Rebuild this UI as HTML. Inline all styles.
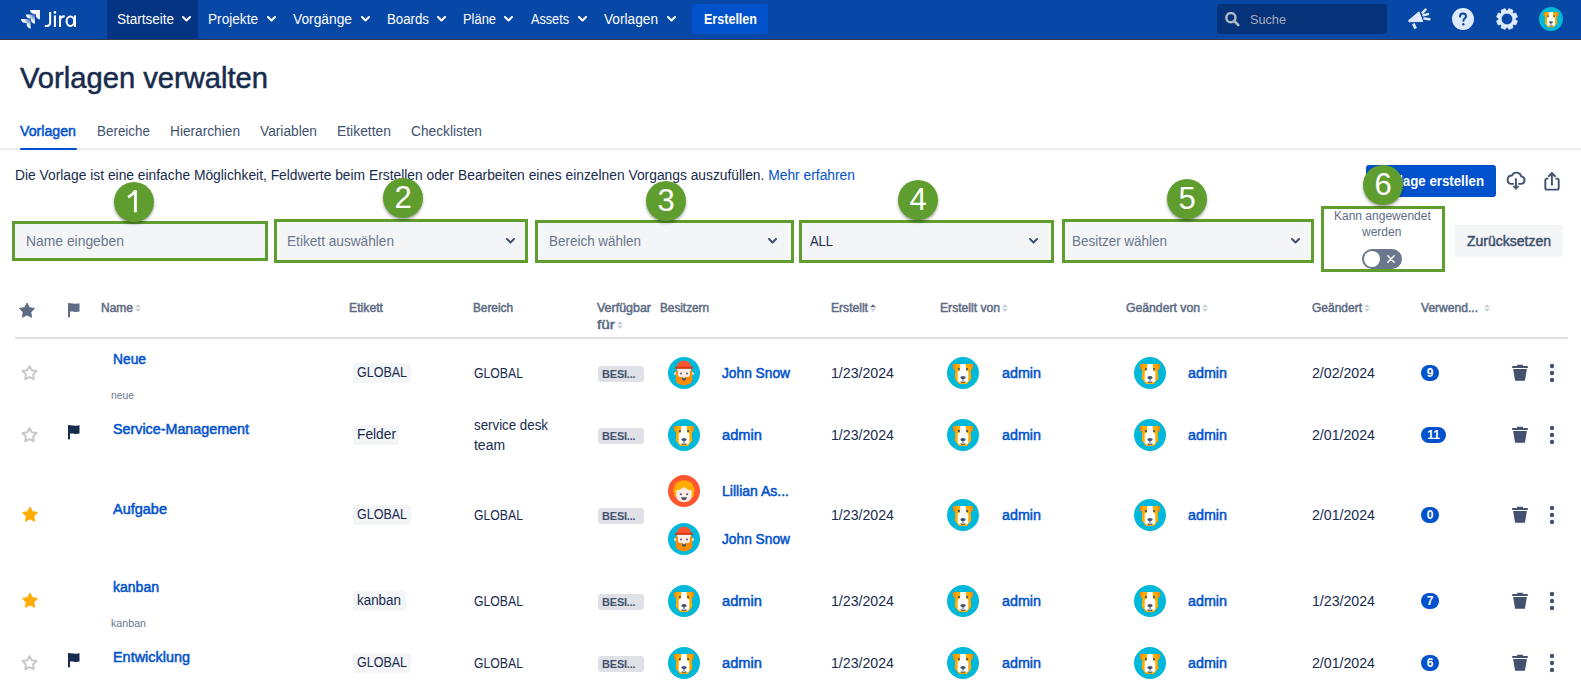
<!DOCTYPE html>
<html><head><meta charset="utf-8"><style>
html,body{margin:0;padding:0;background:#fff;width:1581px;height:696px;overflow:hidden;position:relative;font-family:"Liberation Sans", sans-serif;}
</style></head><body>

<svg width="0" height="0" style="position:absolute">
<defs>
<symbol id="dog" viewBox="0 0 32 32">
  <circle cx="16" cy="16" r="16" fill="#00b8d9"/>
  <path d="M5.8 8.3C6.5 7 8.5 6.6 10.3 7L10.3 12.8 6.6 12.4z" fill="#ff8b00"/>
  <path d="M26.2 8.3C25.5 7 23.5 6.6 21.7 7L21.7 12.8 25.4 12.4z" fill="#ff8b00"/>
  <path d="M8.6 7H23.4L24.2 21.5 20 27H12L7.8 21.5z" fill="#ffab00"/>
  <path d="M13.3 7H18.7L19 13.3 21.3 14.8V24.2L19.5 25.3H12.5L10.7 24.2V14.8L13 13.3z" fill="#fff"/>
  <circle cx="11.9" cy="12.1" r="1.15" fill="#42526e"/>
  <circle cx="20.1" cy="12.1" r="1.15" fill="#42526e"/>
  <ellipse cx="16" cy="20.4" rx="2.7" ry="1.5" fill="#42526e"/>
  <path d="M15.4 21.2h1.2v2.5h-1.2z" fill="#42526e"/>
  <path d="M13.5 24.3c1 .6 4 .6 5 0l-.6 1.5h-3.8z" fill="#42526e"/>
</symbol>
<symbol id="john" viewBox="0 0 32 32">
  <circle cx="16" cy="16" r="16" fill="#00b8d9"/>
  <circle cx="7.6" cy="16.6" r="1.6" fill="#ffebe6"/>
  <circle cx="24.4" cy="16.6" r="1.6" fill="#ffebe6"/>
  <path d="M8.8 10.5C8.8 6.5 12 3.8 16 3.8S23.2 6.5 23.2 10.5z" fill="#ff5630"/>
  <path d="M7.2 9.9h17.6v2H7.2z" fill="#de350b"/>
  <path d="M9 11.9h14v8H9z" fill="#ffebe6"/>
  <path d="M7.8 13.5h2.2v5.6c1.5 1 3.5 1.4 6 1.4s4.5-.4 6-1.4v-5.6h2.2v9.3c0 1.6-.8 2.6-1.6 3.1-.7.4-1.1 1-2 1.1-.6.1-1 .6-1.6.7-.6.1-1.2.5-1.9.5h-2.2c-.7 0-1.3-.4-1.9-.5-.6-.1-1-.6-1.6-.7-.9-.1-1.3-.7-2-1.1-.8-.5-1.6-1.5-1.6-3.1z" fill="#ff8b00"/>
  <circle cx="13" cy="16.6" r="1" fill="#505f79"/>
  <circle cx="19" cy="16.6" r="1" fill="#505f79"/>
  <path d="M14.5 19.8h3l-.5 .9h-2z" fill="#ffebe6"/>
  <path d="M13.8 21.3h4.4c0 1.5-1 2.4-2.2 2.4s-2.2-.9-2.2-2.4z" fill="#42526e"/>
</symbol>
<symbol id="lillian" viewBox="0 0 32 32">
  <circle cx="16" cy="16" r="16" fill="#ff5630"/>
  <path d="M5.5 16.5c-.8-1.5-.3-3.3.9-4 .3-4.2 4-6.9 9.6-6.9s9.3 2.7 9.6 6.9c1.2.7 1.7 2.5.9 4l-1 5.5H6.5z" fill="#ffab00"/>
  <path d="M8.2 15.2c3-.1 5.8-1.3 7.8-3.5 2 2.2 4.8 3.4 7.8 3.5V21c0 3.6-3.4 6.2-7.8 6.2S8.2 24.6 8.2 21z" fill="#ffebe6"/>
  <circle cx="12.8" cy="19.3" r="1.05" fill="#42526e"/>
  <circle cx="19.2" cy="19.3" r="1.05" fill="#42526e"/>
  <path d="M13.2 22.2h5.6c0 1.9-1.2 3-2.8 3s-2.8-1.1-2.8-3z" fill="#42526e"/>
  <path d="M14.6 24.5c.5-.7 2.3-.7 2.8 0-.5.6-2.3.6-2.8 0z" fill="#de350b"/>
</symbol>
<symbol id="starfill" viewBox="0 0 16 16"><path d="M8.00 0.90 L10.41 5.58 L15.61 6.43 L11.90 10.17 L12.70 15.37 L8.00 13.00 L3.30 15.37 L4.10 10.17 L0.39 6.43 L5.59 5.58Z" stroke-width="0.8" stroke-linejoin="round"/></symbol>
<symbol id="flag" viewBox="0 0 12 15"><rect x="0" y="0" width="2" height="14.6" rx="0.8"/><path d="M0 0.4C3-0.4 5.5 0.9 8 0.7 9.5 0.6 10.5 0.5 11.5 0.3V8.5C10 8.9 8.5 9.1 7 8.9 4.5 8.6 2.5 8.3 0 8.8Z"/></symbol>
<symbol id="trash" viewBox="0 0 24 24"><path d="M4.5 5.5h15v2h-15z M9.5 4h5v1.5h-5z M5.8 8.5h12.4l-1.4 11.5H7.2z"/></symbol>
<symbol id="sort" viewBox="0 0 7 10"><path d="M3.5 0.3L6.6 3.9H0.4z M3.5 9.7L6.6 6.1H0.4z"/></symbol>
</defs>
</svg>

<div style="position:absolute;left:0;top:0;width:1581px;height:39px;background:#0747a6"></div><div style="position:absolute;left:0;top:39px;width:1581px;height:1px;background:#333c4a"></div><svg style="position:absolute;left:20px;top:9px" width="21" height="21" viewBox="0 0 21 21">
<defs><radialGradient id="jg1" gradientUnits="userSpaceOnUse" cx="14.9" cy="5.4" r="9.5"><stop offset="0.15" stop-color="#fff" stop-opacity=".25"/><stop offset="0.75" stop-color="#fff" stop-opacity="1"/></radialGradient>
<radialGradient id="jg2" gradientUnits="userSpaceOnUse" cx="10.6" cy="9.9" r="9.5"><stop offset="0.15" stop-color="#fff" stop-opacity=".25"/><stop offset="0.75" stop-color="#fff" stop-opacity="1"/></radialGradient></defs>
<path d="M9.9 1.1H19.9V10.6C17.5 10.2 15.9 8.5 15.9 6V5.2H15C12.5 5.2 10.3 3.5 9.9 1.1Z" fill="#fff"/>
<path d="M5.8 5.4H14.9V14.9C12.5 14.5 10.9 12.8 10.9 10.3V9.4H10C7.5 9.4 6.2 7.8 5.8 5.4Z" fill="url(#jg1)"/>
<path d="M0.9 9.9H10.6V19.7C8.2 19.3 6.6 17.6 6.6 15.1V14H5.5C3 14 1.3 12.3 0.9 9.9Z" fill="url(#jg2)"/>
</svg><svg style="position:absolute;left:40px;top:5px" width="40" height="26" viewBox="0 0 40 26"><g fill="none" stroke="#fff" stroke-width="2.05"><path d="M10.15 7V17.3C10.15 19.8 8.8 21 6.8 21H4.85"/><path d="M14.9 10.4V22"/><path d="M20 10.4V22M20 14.6C20.6 12 22.3 11.2 24.8 11.4"/><ellipse cx="30.4" cy="16.2" rx="3.8" ry="4.8"/><path d="M35 10.4V22"/></g><circle cx="14.95" cy="7.4" r="1.3" fill="#fff"/></svg><div style="position:absolute;left:107px;top:0;width:91px;height:39px;background:#043482"></div><div style="position:absolute;left:117px;top:11px;width:61px;font-size:14px;line-height:16px;color:#fff;white-space:nowrap"><span style="display:inline-block;transform-origin:0 0;transform:scaleX(0.9638)">Startseite</span></div><svg style="position:absolute;left:182px;top:16px" width="9" height="6" viewBox="0 0 9 6"><path d="M1 1l3.5 3.5L8 1" fill="none" stroke="#fff" stroke-width="2" stroke-linecap="round" stroke-linejoin="round"/></svg><div style="position:absolute;left:208px;top:11px;width:54px;font-size:14px;line-height:16px;color:#fff;white-space:nowrap"><span style="display:inline-block;transform-origin:0 0;transform:scaleX(0.9735)">Projekte</span></div><svg style="position:absolute;left:267px;top:16px" width="9" height="6" viewBox="0 0 9 6"><path d="M1 1l3.5 3.5L8 1" fill="none" stroke="#fff" stroke-width="2" stroke-linecap="round" stroke-linejoin="round"/></svg><div style="position:absolute;left:293px;top:11px;width:63px;font-size:14px;line-height:16px;color:#fff;white-space:nowrap"><span style="display:inline-block;transform-origin:0 0;transform:scaleX(0.9841)">Vorgänge</span></div><svg style="position:absolute;left:361px;top:16px" width="9" height="6" viewBox="0 0 9 6"><path d="M1 1l3.5 3.5L8 1" fill="none" stroke="#fff" stroke-width="2" stroke-linecap="round" stroke-linejoin="round"/></svg><div style="position:absolute;left:387px;top:11px;width:46px;font-size:14px;line-height:16px;color:#fff;white-space:nowrap"><span style="display:inline-block;transform-origin:0 0;transform:scaleX(0.9468)">Boards</span></div><svg style="position:absolute;left:437px;top:16px" width="9" height="6" viewBox="0 0 9 6"><path d="M1 1l3.5 3.5L8 1" fill="none" stroke="#fff" stroke-width="2" stroke-linecap="round" stroke-linejoin="round"/></svg><div style="position:absolute;left:463px;top:11px;width:37px;font-size:14px;line-height:16px;color:#fff;white-space:nowrap"><span style="display:inline-block;transform-origin:0 0;transform:scaleX(0.9215)">Pläne</span></div><svg style="position:absolute;left:504px;top:16px" width="9" height="6" viewBox="0 0 9 6"><path d="M1 1l3.5 3.5L8 1" fill="none" stroke="#fff" stroke-width="2" stroke-linecap="round" stroke-linejoin="round"/></svg><div style="position:absolute;left:531px;top:11px;width:42px;font-size:14px;line-height:16px;color:#fff;white-space:nowrap"><span style="display:inline-block;transform-origin:0 0;transform:scaleX(0.9044)">Assets</span></div><svg style="position:absolute;left:578px;top:16px" width="9" height="6" viewBox="0 0 9 6"><path d="M1 1l3.5 3.5L8 1" fill="none" stroke="#fff" stroke-width="2" stroke-linecap="round" stroke-linejoin="round"/></svg><div style="position:absolute;left:604px;top:11px;width:58px;font-size:14px;line-height:16px;color:#fff;white-space:nowrap"><span style="display:inline-block;transform-origin:0 0;transform:scaleX(0.9768)">Vorlagen</span></div><svg style="position:absolute;left:667px;top:16px" width="9" height="6" viewBox="0 0 9 6"><path d="M1 1l3.5 3.5L8 1" fill="none" stroke="#fff" stroke-width="2" stroke-linecap="round" stroke-linejoin="round"/></svg><div style="position:absolute;left:692px;top:4px;width:76px;height:30px;background:#0052cc;border-radius:3px"></div><div style="position:absolute;left:704px;top:11px;font-size:14px;line-height:16px;color:#fff;font-weight:700;white-space:nowrap"><span style="display:inline-block;transform-origin:0 0;transform:scaleX(0.8962)">Erstellen</span></div><div style="position:absolute;left:1217px;top:4px;width:170px;height:30px;background:#06327a;border-radius:3px"></div><svg style="position:absolute;left:1225px;top:12px" width="16" height="16" viewBox="0 0 16 16"><circle cx="5.9" cy="5.7" r="4.6" fill="none" stroke="#b3bac5" stroke-width="2.4"/><path d="M9.3 9.2L13.3 13" stroke="#b3bac5" stroke-width="2.6" stroke-linecap="round"/></svg><div style="position:absolute;left:1250px;top:12px;font-size:13px;line-height:15px;color:#a5adba;white-space:nowrap"><span style="display:inline-block;transform-origin:0 0;transform:scaleX(0.9763)">Suche</span></div><svg style="position:absolute;left:1404px;top:5px" width="30" height="28" viewBox="0 0 30 28"><path d="M4.5 15.6L15 6.8 18.7 16.5 5 16.8z" fill="#deebff" stroke="#deebff" stroke-width="1" stroke-linejoin="round"/><path d="M9.3 18.6L11.6 23.7" stroke="#deebff" stroke-width="2.8"/><path d="M18.6 7.6L21.6 4.6 M19.5 10.3L24 9.1 M20.4 13.5L25.4 14.3" stroke="#deebff" stroke-width="2.5" stroke-linecap="round"/></svg><svg style="position:absolute;left:1452px;top:8px" width="22" height="22" viewBox="0 0 22 22"><circle cx="11" cy="11" r="11" fill="#deebff"/><path d="M8 8.5c0-2 1.4-3 3-3s3 1 3 2.8c0 2.2-2.6 2.2-2.6 4.5" fill="none" stroke="#0747a6" stroke-width="2" stroke-linecap="round"/><circle cx="11.3" cy="16.2" r="1.2" fill="#0747a6"/></svg><svg style="position:absolute;left:1496px;top:8px" width="22" height="22" viewBox="0 0 22 22"><path fill-rule="evenodd" fill="#deebff" stroke="#deebff" stroke-width="0.6" stroke-linejoin="round" d="M11.67 2.53 L12.95 0.48 L17.06 2.18 L16.52 4.54 L17.46 5.48 L19.82 4.94 L21.52 9.05 L19.47 10.33 L19.47 11.67 L21.52 12.95 L19.82 17.06 L17.46 16.52 L16.52 17.46 L17.06 19.82 L12.95 21.52 L11.67 19.47 L10.33 19.47 L9.05 21.52 L4.94 19.82 L5.48 17.46 L4.54 16.52 L2.18 17.06 L0.48 12.95 L2.53 11.67 L2.53 10.33 L0.48 9.05 L2.18 4.94 L4.54 5.48 L5.48 4.54 L4.94 2.18 L9.05 0.48 L10.33 2.53Z M16.7 11 A5.7 5.7 0 1 0 5.3 11 A5.7 5.7 0 1 0 16.7 11Z"/></svg><svg style="position:absolute;left:1539px;top:7px" width="24" height="24"><use href="#dog"/></svg><div style="position:absolute;left:20px;top:62px;font-size:29px;line-height:32px;color:#172b4d;-webkit-text-stroke:0.5px #172b4d;white-space:nowrap"><span style="display:inline-block;transform-origin:0 0;transform:scaleX(1.0054)">Vorlagen verwalten</span></div><div style="position:absolute;left:20px;top:123px;font-size:14px;line-height:16px;color:#0052cc;font-weight:400;-webkit-text-stroke:0.5px currentColor;white-space:nowrap"><span style="display:inline-block;transform-origin:0 0;transform:scaleX(1.0130)">Vorlagen</span></div><div style="position:absolute;left:97px;top:123px;font-size:14px;line-height:16px;color:#42526e;font-weight:400;white-space:nowrap"><span style="display:inline-block;transform-origin:0 0;transform:scaleX(0.9590)">Bereiche</span></div><div style="position:absolute;left:170px;top:123px;font-size:14px;line-height:16px;color:#42526e;font-weight:400;white-space:nowrap"><span style="display:inline-block;transform-origin:0 0;transform:scaleX(0.9777)">Hierarchien</span></div><div style="position:absolute;left:260px;top:123px;font-size:14px;line-height:16px;color:#42526e;font-weight:400;white-space:nowrap"><span style="display:inline-block;transform-origin:0 0;transform:scaleX(0.9806)">Variablen</span></div><div style="position:absolute;left:337px;top:123px;font-size:14px;line-height:16px;color:#42526e;font-weight:400;white-space:nowrap"><span style="display:inline-block;transform-origin:0 0;transform:scaleX(0.9911)">Etiketten</span></div><div style="position:absolute;left:411px;top:123px;font-size:14px;line-height:16px;color:#42526e;font-weight:400;white-space:nowrap"><span style="display:inline-block;transform-origin:0 0;transform:scaleX(0.9810)">Checklisten</span></div><div style="position:absolute;left:0;top:148px;width:1581px;height:2px;background:#ebecf0"></div><div style="position:absolute;left:20px;top:148px;width:57px;height:2px;border-radius:1px;background:#0052cc"></div><div style="position:absolute;left:15px;top:167px;font-size:14px;line-height:16px;color:#172b4d;white-space:nowrap"><span style="display:inline-block;transform-origin:0 0;transform:scaleX(0.9866)">Die Vorlage ist eine einfache Möglichkeit, Feldwerte beim Erstellen oder Bearbeiten eines einzelnen Vorgangs auszufüllen. <span style="color:#0052cc">Mehr erfahren</span></span></div><div style="position:absolute;left:1366px;top:165px;width:130px;height:32px;background:#0052cc;border-radius:3px"></div><div style="position:absolute;left:1378px;top:173px;font-size:14px;line-height:16px;color:#fff;font-weight:700;white-space:nowrap"><span style="display:inline-block;transform-origin:0 0;transform:scaleX(0.9481)">Vorlage erstellen</span></div><svg style="position:absolute;left:1500px;top:165px" width="65" height="32" viewBox="0 0 65 32"><g fill="none" stroke="#42526e" stroke-width="1.9" stroke-linecap="butt" stroke-linejoin="round"><path d="M13.8 18.9H10.6A4.3 4.3 0 0 1 11.9 10.5A5 5 0 0 1 21.3 11.4A3.8 3.8 0 0 1 21.4 18.9H18.3"/><path d="M15.9 13.3V21.5"/><path d="M48.4 13.6H46.7A1.6 1.6 0 0 0 45.3 15.2V23A1.6 1.6 0 0 0 46.9 24.6H57.1A1.6 1.6 0 0 0 58.7 23V15.2A1.6 1.6 0 0 0 57.1 13.6H55.4"/><path d="M51.9 20.5V8.2"/><path d="M48.9 11.1L51.9 8 54.9 11.1" stroke-linecap="square"/></g><path d="M13 21.2L15.9 24.6 18.8 21.2z" fill="#42526e" stroke="#42526e" stroke-width="0.8" stroke-linejoin="round"/></svg><div style="position:absolute;left:12px;top:221px;width:256px;height:40px;background:#f4f5f7"></div><div style="position:absolute;left:26px;top:233px;font-size:14px;line-height:16px;color:#6b778c;white-space:nowrap"><span style="display:inline-block;transform-origin:0 0;transform:scaleX(0.9913)">Name eingeben</span></div><div style="position:absolute;left:12px;top:221px;width:256px;height:40px;box-sizing:border-box;border:3px solid #5f9e2e"></div><div style="position:absolute;left:274px;top:219px;width:254px;height:44px;background:#f4f5f7"></div><div style="position:absolute;left:287px;top:233px;font-size:14px;line-height:16px;color:#6b778c;white-space:nowrap"><span style="display:inline-block;transform-origin:0 0;transform:scaleX(0.9751)">Etikett auswählen</span></div><svg style="position:absolute;left:506px;top:238px" width="9" height="6" viewBox="0 0 9 6"><path d="M1 1l3.5 3.5L8 1" fill="none" stroke="#42526e" stroke-width="2" stroke-linecap="round" stroke-linejoin="round"/></svg><div style="position:absolute;left:274px;top:219px;width:254px;height:44px;box-sizing:border-box;border:3px solid #5f9e2e"></div><div style="position:absolute;left:535px;top:220px;width:259px;height:43px;background:#f4f5f7"></div><div style="position:absolute;left:549px;top:233px;font-size:14px;line-height:16px;color:#6b778c;white-space:nowrap"><span style="display:inline-block;transform-origin:0 0;transform:scaleX(0.9610)">Bereich wählen</span></div><svg style="position:absolute;left:768px;top:238px" width="9" height="6" viewBox="0 0 9 6"><path d="M1 1l3.5 3.5L8 1" fill="none" stroke="#42526e" stroke-width="2" stroke-linecap="round" stroke-linejoin="round"/></svg><div style="position:absolute;left:535px;top:220px;width:259px;height:43px;box-sizing:border-box;border:3px solid #5f9e2e"></div><div style="position:absolute;left:799px;top:220px;width:255px;height:43px;background:#f4f5f7"></div><div style="position:absolute;left:810px;top:233px;font-size:14px;line-height:16px;color:#172b4d;white-space:nowrap"><span style="display:inline-block;transform-origin:0 0;transform:scaleX(0.9229)">ALL</span></div><svg style="position:absolute;left:1029px;top:238px" width="9" height="6" viewBox="0 0 9 6"><path d="M1 1l3.5 3.5L8 1" fill="none" stroke="#42526e" stroke-width="2" stroke-linecap="round" stroke-linejoin="round"/></svg><div style="position:absolute;left:799px;top:220px;width:255px;height:43px;box-sizing:border-box;border:3px solid #5f9e2e"></div><div style="position:absolute;left:1062px;top:219px;width:252px;height:44px;background:#f4f5f7"></div><div style="position:absolute;left:1072px;top:233px;font-size:14px;line-height:16px;color:#6b778c;white-space:nowrap"><span style="display:inline-block;transform-origin:0 0;transform:scaleX(0.9613)">Besitzer wählen</span></div><svg style="position:absolute;left:1291px;top:238px" width="9" height="6" viewBox="0 0 9 6"><path d="M1 1l3.5 3.5L8 1" fill="none" stroke="#42526e" stroke-width="2" stroke-linecap="round" stroke-linejoin="round"/></svg><div style="position:absolute;left:1062px;top:219px;width:252px;height:44px;box-sizing:border-box;border:3px solid #5f9e2e"></div><div style="position:absolute;left:1321px;top:206px;width:124px;height:66px;box-sizing:border-box;border:3px solid #5f9e2e"></div><div style="position:absolute;left:1334px;top:209px;font-size:12px;line-height:14px;color:#5e6c84;font-weight:400;white-space:nowrap;line-height:14px">Kann angewendet</div><div style="position:absolute;left:1362px;top:225px;font-size:12px;line-height:14px;color:#5e6c84;font-weight:400;white-space:nowrap;line-height:14px">werden</div><div style="position:absolute;left:1362px;top:249px;width:40px;height:20px;border-radius:10px;background:#6b778c"></div><div style="position:absolute;left:1364px;top:251px;width:16px;height:16px;border-radius:8px;background:#fff"></div><svg style="position:absolute;left:1386.5px;top:255px" width="8" height="8" viewBox="0 0 8 8"><path d="M0.8 0.8l6.4 6.4M7.2 0.8L0.8 7.2" stroke="#fff" stroke-width="1.5" stroke-linecap="round"/></svg><div style="position:absolute;left:1455px;top:225px;width:108px;height:32px;background:#f4f5f7;border-radius:3px"></div><div style="position:absolute;left:1467px;top:233px;font-size:14px;line-height:16px;color:#42526e;font-weight:400;-webkit-text-stroke:0.5px currentColor;white-space:nowrap"><span style="display:inline-block;transform-origin:0 0;transform:scaleX(0.9994)">Zurücksetzen</span></div><div style="position:absolute;left:114px;top:182px;width:40px;height:40px;border-radius:20px;background:#5f9e2e;box-shadow:0 2px 3px rgba(0,0,0,.35)"></div><svg style="position:absolute;left:114px;top:182px" width="40" height="40" viewBox="0 0 40 40"><path d="M21.4 8.2V30.2" stroke="#fff" stroke-width="2.9"/><path d="M21.4 8.6C19.6 11.5 17.2 13.6 14 15.2" fill="none" stroke="#fff" stroke-width="2.7"/></svg><div style="position:absolute;left:383px;top:178px;width:40px;height:40px;border-radius:20px;background:#5f9e2e;box-shadow:0 2px 3px rgba(0,0,0,.35)"></div><div style="position:absolute;left:383px;top:178px;width:40px;height:40px;text-align:center;font-size:31px;line-height:40px;color:#fff">2</div><div style="position:absolute;left:646px;top:181px;width:40px;height:40px;border-radius:20px;background:#5f9e2e;box-shadow:0 2px 3px rgba(0,0,0,.35)"></div><div style="position:absolute;left:646px;top:181px;width:40px;height:40px;text-align:center;font-size:31px;line-height:40px;color:#fff">3</div><div style="position:absolute;left:898px;top:180px;width:40px;height:40px;border-radius:20px;background:#5f9e2e;box-shadow:0 2px 3px rgba(0,0,0,.35)"></div><div style="position:absolute;left:898px;top:180px;width:40px;height:40px;text-align:center;font-size:31px;line-height:40px;color:#fff">4</div><div style="position:absolute;left:1167px;top:179px;width:40px;height:40px;border-radius:20px;background:#5f9e2e;box-shadow:0 2px 3px rgba(0,0,0,.35)"></div><div style="position:absolute;left:1167px;top:179px;width:40px;height:40px;text-align:center;font-size:31px;line-height:40px;color:#fff">5</div><div style="position:absolute;left:1363px;top:165px;width:40px;height:40px;border-radius:20px;background:#5f9e2e;box-shadow:0 2px 3px rgba(0,0,0,.35)"></div><div style="position:absolute;left:1363px;top:165px;width:40px;height:40px;text-align:center;font-size:31px;line-height:40px;color:#fff">6</div><svg style="position:absolute;left:19px;top:302px" width="16" height="16" viewBox="0 0 16 16" fill="#5e6c84" stroke="#5e6c84"><use href="#starfill"/></svg><svg style="position:absolute;left:68px;top:303px" width="12" height="15" viewBox="0 0 12 15" fill="#5e6c84"><use href="#flag"/></svg><div style="position:absolute;left:101px;top:300px;font-size:12px;line-height:16px;color:#5e6c84;font-weight:400;-webkit-text-stroke:0.5px currentColor;white-space:nowrap"><span style="display:inline-block;transform-origin:0 0;transform:scaleX(0.9995)">Name</span></div><svg style="position:absolute;left:135px;top:304px" width="6" height="8" viewBox="0 0 6 8"><path d="M0 3.2L3 0.2 6 3.2z" fill="#c8ccd4"/><path d="M0 4.8L3 7.8 6 4.8z" fill="#c8ccd4"/></svg><div style="position:absolute;left:349px;top:300px;font-size:12px;line-height:16px;color:#5e6c84;font-weight:400;-webkit-text-stroke:0.5px currentColor;white-space:nowrap"><span style="display:inline-block;transform-origin:0 0;transform:scaleX(1.0192)">Etikett</span></div><div style="position:absolute;left:473px;top:300px;font-size:12px;line-height:16px;color:#5e6c84;font-weight:400;-webkit-text-stroke:0.5px currentColor;white-space:nowrap"><span style="display:inline-block;transform-origin:0 0;transform:scaleX(0.9831)">Bereich</span></div><div style="position:absolute;left:597px;top:300px;font-size:12px;line-height:16px;color:#5e6c84;font-weight:400;-webkit-text-stroke:0.5px currentColor;white-space:nowrap"><span style="display:inline-block;transform-origin:0 0;transform:scaleX(1.0375)">Verfügbar</span></div><div style="position:absolute;left:597px;top:317px;font-size:12px;line-height:16px;color:#5e6c84;font-weight:400;-webkit-text-stroke:0.5px currentColor;white-space:nowrap"><span style="display:inline-block;transform-origin:0 0;transform:scaleX(1.2843)">für</span></div><svg style="position:absolute;left:617px;top:321px" width="6" height="8" viewBox="0 0 6 8"><path d="M0 3.2L3 0.2 6 3.2z" fill="#c8ccd4"/><path d="M0 4.8L3 7.8 6 4.8z" fill="#c8ccd4"/></svg><div style="position:absolute;left:660px;top:300px;font-size:12px;line-height:16px;color:#5e6c84;font-weight:400;-webkit-text-stroke:0.5px currentColor;white-space:nowrap"><span style="display:inline-block;transform-origin:0 0;transform:scaleX(0.9794)">Besitzern</span></div><div style="position:absolute;left:831px;top:300px;font-size:12px;line-height:16px;color:#5e6c84;font-weight:400;-webkit-text-stroke:0.5px currentColor;white-space:nowrap"><span style="display:inline-block;transform-origin:0 0;transform:scaleX(1.0085)">Erstellt</span></div><svg style="position:absolute;left:870px;top:304px" width="6" height="8" viewBox="0 0 6 8"><path d="M0 3.2L3 0.2 6 3.2z" fill="#5e6c84"/><path d="M0 4.8L3 7.8 6 4.8z" fill="#c8ccd4"/></svg><div style="position:absolute;left:940px;top:300px;font-size:12px;line-height:16px;color:#5e6c84;font-weight:400;-webkit-text-stroke:0.5px currentColor;white-space:nowrap"><span style="display:inline-block;transform-origin:0 0;transform:scaleX(1.0108)">Erstellt von</span></div><svg style="position:absolute;left:1002px;top:304px" width="6" height="8" viewBox="0 0 6 8"><path d="M0 3.2L3 0.2 6 3.2z" fill="#c8ccd4"/><path d="M0 4.8L3 7.8 6 4.8z" fill="#c8ccd4"/></svg><div style="position:absolute;left:1126px;top:300px;font-size:12px;line-height:16px;color:#5e6c84;font-weight:400;-webkit-text-stroke:0.5px currentColor;white-space:nowrap"><span style="display:inline-block;transform-origin:0 0;transform:scaleX(1.0176)">Geändert von</span></div><svg style="position:absolute;left:1202px;top:304px" width="6" height="8" viewBox="0 0 6 8"><path d="M0 3.2L3 0.2 6 3.2z" fill="#c8ccd4"/><path d="M0 4.8L3 7.8 6 4.8z" fill="#c8ccd4"/></svg><div style="position:absolute;left:1312px;top:300px;font-size:12px;line-height:16px;color:#5e6c84;font-weight:400;-webkit-text-stroke:0.5px currentColor;white-space:nowrap"><span style="display:inline-block;transform-origin:0 0;transform:scaleX(0.9991)">Geändert</span></div><svg style="position:absolute;left:1364px;top:304px" width="6" height="8" viewBox="0 0 6 8"><path d="M0 3.2L3 0.2 6 3.2z" fill="#c8ccd4"/><path d="M0 4.8L3 7.8 6 4.8z" fill="#c8ccd4"/></svg><div style="position:absolute;left:1421px;top:300px;font-size:12px;line-height:16px;color:#5e6c84;font-weight:400;-webkit-text-stroke:0.5px currentColor;white-space:nowrap"><span style="display:inline-block;transform-origin:0 0;transform:scaleX(1.0052)">Verwend...</span></div><svg style="position:absolute;left:1484px;top:304px" width="6" height="8" viewBox="0 0 6 8"><path d="M0 3.2L3 0.2 6 3.2z" fill="#c8ccd4"/><path d="M0 4.8L3 7.8 6 4.8z" fill="#c8ccd4"/></svg><div style="position:absolute;left:15px;top:337px;width:1553px;height:2px;background:#dfe1e6"></div><svg style="position:absolute;left:21px;top:364px" width="17" height="17" viewBox="0 0 17 17"><path d="M8.50 2.00 L10.73 6.23 L15.44 7.04 L12.11 10.47 L12.79 15.21 L8.50 13.10 L4.21 15.21 L4.89 10.47 L1.56 7.04 L6.27 6.23Z" fill="none" stroke="#c6c8cc" stroke-width="1.9" stroke-linejoin="round"/></svg><div style="position:absolute;left:113px;top:351px;font-size:14px;line-height:16px;color:#0052cc;font-weight:400;-webkit-text-stroke:0.5px currentColor;white-space:nowrap"><span style="display:inline-block;transform-origin:0 0;transform:scaleX(0.9860)">Neue</span></div><div style="position:absolute;left:111px;top:388px;font-size:11px;line-height:14px;color:#6b778c;white-space:nowrap"><span style="display:inline-block;transform-origin:0 0;transform:scaleX(0.9394)">neue</span></div><div style="position:absolute;left:353px;top:363px;width:58px;height:20px;background:#f4f5f7;border-radius:3px"></div><div style="position:absolute;left:357px;top:364px;font-size:14px;line-height:16px;color:#172b4d;white-space:nowrap"><span style="display:inline-block;transform-origin:0 0;transform:scaleX(0.8924)">GLOBAL</span></div><div style="position:absolute;left:474px;top:365px;font-size:14px;line-height:16px;color:#172b4d;font-weight:400;white-space:nowrap"><span style="display:inline-block;transform-origin:0 0;transform:scaleX(0.8745)">GLOBAL</span></div><div style="position:absolute;left:598px;top:366px;width:46px;height:16px;background:#dfe1e6;border-radius:3px"></div><div style="position:absolute;left:602px;top:367px;font-size:11px;line-height:14px;color:#42526e;font-weight:700;white-space:nowrap;letter-spacing:-0.2px">BESI...</div><svg style="position:absolute;left:668px;top:357px" width="32" height="32"><use href="#john"/></svg><div style="position:absolute;left:722px;top:365px;font-size:14px;line-height:16px;color:#0052cc;font-weight:400;-webkit-text-stroke:0.5px currentColor;white-space:nowrap"><span style="display:inline-block;transform-origin:0 0;transform:scaleX(0.9815)">John Snow</span></div><div style="position:absolute;left:831px;top:365px;font-size:14px;line-height:16px;color:#172b4d;font-weight:400;white-space:nowrap"><span style="display:inline-block;transform-origin:0 0;transform:scaleX(1.0113)">1/23/2024</span></div><svg style="position:absolute;left:947px;top:357px" width="32" height="32"><use href="#dog"/></svg><div style="position:absolute;left:1002px;top:365px;font-size:14px;line-height:16px;color:#0052cc;font-weight:400;-webkit-text-stroke:0.5px currentColor;white-space:nowrap"><span style="display:inline-block;transform-origin:0 0;transform:scaleX(1.0225)">admin</span></div><svg style="position:absolute;left:1134px;top:357px" width="32" height="32"><use href="#dog"/></svg><div style="position:absolute;left:1188px;top:365px;font-size:14px;line-height:16px;color:#0052cc;font-weight:400;-webkit-text-stroke:0.5px currentColor;white-space:nowrap"><span style="display:inline-block;transform-origin:0 0;transform:scaleX(1.0225)">admin</span></div><div style="position:absolute;left:1312px;top:365px;font-size:14px;line-height:16px;color:#172b4d;font-weight:400;white-space:nowrap"><span style="display:inline-block;transform-origin:0 0;transform:scaleX(1.0113)">2/02/2024</span></div><div style="position:absolute;left:1421px;top:365px;width:18px;height:16px;border-radius:8px;background:#0052cc;color:#fff;font-size:12px;line-height:16px;font-weight:700;text-align:center">9</div><svg style="position:absolute;left:1505px;top:360px" width="25" height="28" viewBox="0 0 25 28" fill="#42526e"><rect x="7" y="6" width="16" height="1.9" rx="0.9"/><rect x="12" y="4.8" width="6" height="1.6" rx="0.4"/><path d="M8.1 9H21.9L19.9 20.8H10.1Z"/></svg><svg style="position:absolute;left:1548px;top:363px" width="8" height="20" viewBox="0 0 8 20" fill="#42526e"><circle cx="4" cy="3" r="2.2"/><circle cx="4" cy="10" r="2.2"/><circle cx="4" cy="17" r="2.2"/></svg><svg style="position:absolute;left:21px;top:426px" width="17" height="17" viewBox="0 0 17 17"><path d="M8.50 2.00 L10.73 6.23 L15.44 7.04 L12.11 10.47 L12.79 15.21 L8.50 13.10 L4.21 15.21 L4.89 10.47 L1.56 7.04 L6.27 6.23Z" fill="none" stroke="#c6c8cc" stroke-width="1.9" stroke-linejoin="round"/></svg><svg style="position:absolute;left:68px;top:425px" width="12" height="15" viewBox="0 0 12 15" fill="#172b4d"><use href="#flag"/></svg><div style="position:absolute;left:113px;top:421px;font-size:14px;line-height:16px;color:#0052cc;font-weight:400;-webkit-text-stroke:0.5px currentColor;white-space:nowrap"><span style="display:inline-block;transform-origin:0 0;transform:scaleX(1.0221)">Service-Management</span></div><div style="position:absolute;left:353px;top:425px;width:46px;height:20px;background:#f4f5f7;border-radius:3px"></div><div style="position:absolute;left:357px;top:426px;font-size:14px;line-height:16px;color:#172b4d;white-space:nowrap"><span style="display:inline-block;transform-origin:0 0;transform:scaleX(0.9827)">Felder</span></div><div style="position:absolute;left:474px;top:417px;font-size:14px;line-height:16px;color:#172b4d;font-weight:400;white-space:nowrap"><span style="display:inline-block;transform-origin:0 0;transform:scaleX(0.9510)">service desk</span></div><div style="position:absolute;left:474px;top:437px;font-size:14px;line-height:16px;color:#172b4d;font-weight:400;white-space:nowrap"><span style="display:inline-block;transform-origin:0 0;transform:scaleX(0.9960)">team</span></div><div style="position:absolute;left:598px;top:428px;width:46px;height:16px;background:#dfe1e6;border-radius:3px"></div><div style="position:absolute;left:602px;top:429px;font-size:11px;line-height:14px;color:#42526e;font-weight:700;white-space:nowrap;letter-spacing:-0.2px">BESI...</div><svg style="position:absolute;left:668px;top:419px" width="32" height="32"><use href="#dog"/></svg><div style="position:absolute;left:722px;top:427px;font-size:14px;line-height:16px;color:#0052cc;font-weight:400;-webkit-text-stroke:0.5px currentColor;white-space:nowrap"><span style="display:inline-block;transform-origin:0 0;transform:scaleX(1.0488)">admin</span></div><div style="position:absolute;left:831px;top:427px;font-size:14px;line-height:16px;color:#172b4d;font-weight:400;white-space:nowrap"><span style="display:inline-block;transform-origin:0 0;transform:scaleX(1.0113)">1/23/2024</span></div><svg style="position:absolute;left:947px;top:419px" width="32" height="32"><use href="#dog"/></svg><div style="position:absolute;left:1002px;top:427px;font-size:14px;line-height:16px;color:#0052cc;font-weight:400;-webkit-text-stroke:0.5px currentColor;white-space:nowrap"><span style="display:inline-block;transform-origin:0 0;transform:scaleX(1.0225)">admin</span></div><svg style="position:absolute;left:1134px;top:419px" width="32" height="32"><use href="#dog"/></svg><div style="position:absolute;left:1188px;top:427px;font-size:14px;line-height:16px;color:#0052cc;font-weight:400;-webkit-text-stroke:0.5px currentColor;white-space:nowrap"><span style="display:inline-block;transform-origin:0 0;transform:scaleX(1.0225)">admin</span></div><div style="position:absolute;left:1312px;top:427px;font-size:14px;line-height:16px;color:#172b4d;font-weight:400;white-space:nowrap"><span style="display:inline-block;transform-origin:0 0;transform:scaleX(1.0113)">2/01/2024</span></div><div style="position:absolute;left:1421px;top:427px;width:25px;height:16px;border-radius:8px;background:#0052cc;color:#fff;font-size:12px;line-height:16px;font-weight:700;text-align:center">11</div><svg style="position:absolute;left:1505px;top:422px" width="25" height="28" viewBox="0 0 25 28" fill="#42526e"><rect x="7" y="6" width="16" height="1.9" rx="0.9"/><rect x="12" y="4.8" width="6" height="1.6" rx="0.4"/><path d="M8.1 9H21.9L19.9 20.8H10.1Z"/></svg><svg style="position:absolute;left:1548px;top:425px" width="8" height="20" viewBox="0 0 8 20" fill="#42526e"><circle cx="4" cy="3" r="2.2"/><circle cx="4" cy="10" r="2.2"/><circle cx="4" cy="17" r="2.2"/></svg><svg style="position:absolute;left:22px;top:506px" width="16" height="16" viewBox="0 0 16 16" fill="#ffab00" stroke="#ffab00"><use href="#starfill"/></svg><div style="position:absolute;left:113px;top:501px;font-size:14px;line-height:16px;color:#0052cc;font-weight:400;-webkit-text-stroke:0.5px currentColor;white-space:nowrap"><span style="display:inline-block;transform-origin:0 0;transform:scaleX(1.0350)">Aufgabe</span></div><div style="position:absolute;left:353px;top:505px;width:58px;height:20px;background:#f4f5f7;border-radius:3px"></div><div style="position:absolute;left:357px;top:506px;font-size:14px;line-height:16px;color:#172b4d;white-space:nowrap"><span style="display:inline-block;transform-origin:0 0;transform:scaleX(0.8924)">GLOBAL</span></div><div style="position:absolute;left:474px;top:507px;font-size:14px;line-height:16px;color:#172b4d;font-weight:400;white-space:nowrap"><span style="display:inline-block;transform-origin:0 0;transform:scaleX(0.8745)">GLOBAL</span></div><div style="position:absolute;left:598px;top:508px;width:46px;height:16px;background:#dfe1e6;border-radius:3px"></div><div style="position:absolute;left:602px;top:509px;font-size:11px;line-height:14px;color:#42526e;font-weight:700;white-space:nowrap;letter-spacing:-0.2px">BESI...</div><svg style="position:absolute;left:668px;top:475px" width="32" height="32"><use href="#lillian"/></svg><div style="position:absolute;left:722px;top:483px;font-size:14px;line-height:16px;color:#0052cc;font-weight:400;-webkit-text-stroke:0.5px currentColor;white-space:nowrap"><span style="display:inline-block;transform-origin:0 0;transform:scaleX(1.0009)">Lillian As...</span></div><svg style="position:absolute;left:668px;top:523px" width="32" height="32"><use href="#john"/></svg><div style="position:absolute;left:722px;top:531px;font-size:14px;line-height:16px;color:#0052cc;font-weight:400;-webkit-text-stroke:0.5px currentColor;white-space:nowrap"><span style="display:inline-block;transform-origin:0 0;transform:scaleX(0.9815)">John Snow</span></div><div style="position:absolute;left:831px;top:507px;font-size:14px;line-height:16px;color:#172b4d;font-weight:400;white-space:nowrap"><span style="display:inline-block;transform-origin:0 0;transform:scaleX(1.0113)">1/23/2024</span></div><svg style="position:absolute;left:947px;top:499px" width="32" height="32"><use href="#dog"/></svg><div style="position:absolute;left:1002px;top:507px;font-size:14px;line-height:16px;color:#0052cc;font-weight:400;-webkit-text-stroke:0.5px currentColor;white-space:nowrap"><span style="display:inline-block;transform-origin:0 0;transform:scaleX(1.0225)">admin</span></div><svg style="position:absolute;left:1134px;top:499px" width="32" height="32"><use href="#dog"/></svg><div style="position:absolute;left:1188px;top:507px;font-size:14px;line-height:16px;color:#0052cc;font-weight:400;-webkit-text-stroke:0.5px currentColor;white-space:nowrap"><span style="display:inline-block;transform-origin:0 0;transform:scaleX(1.0225)">admin</span></div><div style="position:absolute;left:1312px;top:507px;font-size:14px;line-height:16px;color:#172b4d;font-weight:400;white-space:nowrap"><span style="display:inline-block;transform-origin:0 0;transform:scaleX(1.0113)">2/01/2024</span></div><div style="position:absolute;left:1421px;top:507px;width:18px;height:16px;border-radius:8px;background:#0052cc;color:#fff;font-size:12px;line-height:16px;font-weight:700;text-align:center">0</div><svg style="position:absolute;left:1505px;top:502px" width="25" height="28" viewBox="0 0 25 28" fill="#42526e"><rect x="7" y="6" width="16" height="1.9" rx="0.9"/><rect x="12" y="4.8" width="6" height="1.6" rx="0.4"/><path d="M8.1 9H21.9L19.9 20.8H10.1Z"/></svg><svg style="position:absolute;left:1548px;top:505px" width="8" height="20" viewBox="0 0 8 20" fill="#42526e"><circle cx="4" cy="3" r="2.2"/><circle cx="4" cy="10" r="2.2"/><circle cx="4" cy="17" r="2.2"/></svg><svg style="position:absolute;left:22px;top:592px" width="16" height="16" viewBox="0 0 16 16" fill="#ffab00" stroke="#ffab00"><use href="#starfill"/></svg><div style="position:absolute;left:113px;top:579px;font-size:14px;line-height:16px;color:#0052cc;font-weight:400;-webkit-text-stroke:0.5px currentColor;white-space:nowrap"><span style="display:inline-block;transform-origin:0 0;transform:scaleX(1.0014)">kanban</span></div><div style="position:absolute;left:111px;top:616px;font-size:11px;line-height:14px;color:#6b778c;white-space:nowrap"><span style="display:inline-block;transform-origin:0 0;transform:scaleX(0.9697)">kanban</span></div><div style="position:absolute;left:353px;top:591px;width:53px;height:20px;background:#f4f5f7;border-radius:3px"></div><div style="position:absolute;left:357px;top:592px;font-size:14px;line-height:16px;color:#172b4d;white-space:nowrap"><span style="display:inline-block;transform-origin:0 0;transform:scaleX(0.9578)">kanban</span></div><div style="position:absolute;left:474px;top:593px;font-size:14px;line-height:16px;color:#172b4d;font-weight:400;white-space:nowrap"><span style="display:inline-block;transform-origin:0 0;transform:scaleX(0.8745)">GLOBAL</span></div><div style="position:absolute;left:598px;top:594px;width:46px;height:16px;background:#dfe1e6;border-radius:3px"></div><div style="position:absolute;left:602px;top:595px;font-size:11px;line-height:14px;color:#42526e;font-weight:700;white-space:nowrap;letter-spacing:-0.2px">BESI...</div><svg style="position:absolute;left:668px;top:585px" width="32" height="32"><use href="#dog"/></svg><div style="position:absolute;left:722px;top:593px;font-size:14px;line-height:16px;color:#0052cc;font-weight:400;-webkit-text-stroke:0.5px currentColor;white-space:nowrap"><span style="display:inline-block;transform-origin:0 0;transform:scaleX(1.0488)">admin</span></div><div style="position:absolute;left:831px;top:593px;font-size:14px;line-height:16px;color:#172b4d;font-weight:400;white-space:nowrap"><span style="display:inline-block;transform-origin:0 0;transform:scaleX(1.0113)">1/23/2024</span></div><svg style="position:absolute;left:947px;top:585px" width="32" height="32"><use href="#dog"/></svg><div style="position:absolute;left:1002px;top:593px;font-size:14px;line-height:16px;color:#0052cc;font-weight:400;-webkit-text-stroke:0.5px currentColor;white-space:nowrap"><span style="display:inline-block;transform-origin:0 0;transform:scaleX(1.0225)">admin</span></div><svg style="position:absolute;left:1134px;top:585px" width="32" height="32"><use href="#dog"/></svg><div style="position:absolute;left:1188px;top:593px;font-size:14px;line-height:16px;color:#0052cc;font-weight:400;-webkit-text-stroke:0.5px currentColor;white-space:nowrap"><span style="display:inline-block;transform-origin:0 0;transform:scaleX(1.0225)">admin</span></div><div style="position:absolute;left:1312px;top:593px;font-size:14px;line-height:16px;color:#172b4d;font-weight:400;white-space:nowrap"><span style="display:inline-block;transform-origin:0 0;transform:scaleX(1.0113)">1/23/2024</span></div><div style="position:absolute;left:1421px;top:593px;width:18px;height:16px;border-radius:8px;background:#0052cc;color:#fff;font-size:12px;line-height:16px;font-weight:700;text-align:center">7</div><svg style="position:absolute;left:1505px;top:588px" width="25" height="28" viewBox="0 0 25 28" fill="#42526e"><rect x="7" y="6" width="16" height="1.9" rx="0.9"/><rect x="12" y="4.8" width="6" height="1.6" rx="0.4"/><path d="M8.1 9H21.9L19.9 20.8H10.1Z"/></svg><svg style="position:absolute;left:1548px;top:591px" width="8" height="20" viewBox="0 0 8 20" fill="#42526e"><circle cx="4" cy="3" r="2.2"/><circle cx="4" cy="10" r="2.2"/><circle cx="4" cy="17" r="2.2"/></svg><svg style="position:absolute;left:21px;top:654px" width="17" height="17" viewBox="0 0 17 17"><path d="M8.50 2.00 L10.73 6.23 L15.44 7.04 L12.11 10.47 L12.79 15.21 L8.50 13.10 L4.21 15.21 L4.89 10.47 L1.56 7.04 L6.27 6.23Z" fill="none" stroke="#c6c8cc" stroke-width="1.9" stroke-linejoin="round"/></svg><svg style="position:absolute;left:68px;top:653px" width="12" height="15" viewBox="0 0 12 15" fill="#172b4d"><use href="#flag"/></svg><div style="position:absolute;left:113px;top:649px;font-size:14px;line-height:16px;color:#0052cc;font-weight:400;-webkit-text-stroke:0.5px currentColor;white-space:nowrap"><span style="display:inline-block;transform-origin:0 0;transform:scaleX(1.0307)">Entwicklung</span></div><div style="position:absolute;left:353px;top:653px;width:58px;height:20px;background:#f4f5f7;border-radius:3px"></div><div style="position:absolute;left:357px;top:654px;font-size:14px;line-height:16px;color:#172b4d;white-space:nowrap"><span style="display:inline-block;transform-origin:0 0;transform:scaleX(0.8924)">GLOBAL</span></div><div style="position:absolute;left:474px;top:655px;font-size:14px;line-height:16px;color:#172b4d;font-weight:400;white-space:nowrap"><span style="display:inline-block;transform-origin:0 0;transform:scaleX(0.8745)">GLOBAL</span></div><div style="position:absolute;left:598px;top:656px;width:46px;height:16px;background:#dfe1e6;border-radius:3px"></div><div style="position:absolute;left:602px;top:657px;font-size:11px;line-height:14px;color:#42526e;font-weight:700;white-space:nowrap;letter-spacing:-0.2px">BESI...</div><svg style="position:absolute;left:668px;top:647px" width="32" height="32"><use href="#dog"/></svg><div style="position:absolute;left:722px;top:655px;font-size:14px;line-height:16px;color:#0052cc;font-weight:400;-webkit-text-stroke:0.5px currentColor;white-space:nowrap"><span style="display:inline-block;transform-origin:0 0;transform:scaleX(1.0488)">admin</span></div><div style="position:absolute;left:831px;top:655px;font-size:14px;line-height:16px;color:#172b4d;font-weight:400;white-space:nowrap"><span style="display:inline-block;transform-origin:0 0;transform:scaleX(1.0113)">1/23/2024</span></div><svg style="position:absolute;left:947px;top:647px" width="32" height="32"><use href="#dog"/></svg><div style="position:absolute;left:1002px;top:655px;font-size:14px;line-height:16px;color:#0052cc;font-weight:400;-webkit-text-stroke:0.5px currentColor;white-space:nowrap"><span style="display:inline-block;transform-origin:0 0;transform:scaleX(1.0225)">admin</span></div><svg style="position:absolute;left:1134px;top:647px" width="32" height="32"><use href="#dog"/></svg><div style="position:absolute;left:1188px;top:655px;font-size:14px;line-height:16px;color:#0052cc;font-weight:400;-webkit-text-stroke:0.5px currentColor;white-space:nowrap"><span style="display:inline-block;transform-origin:0 0;transform:scaleX(1.0225)">admin</span></div><div style="position:absolute;left:1312px;top:655px;font-size:14px;line-height:16px;color:#172b4d;font-weight:400;white-space:nowrap"><span style="display:inline-block;transform-origin:0 0;transform:scaleX(1.0113)">2/01/2024</span></div><div style="position:absolute;left:1421px;top:655px;width:18px;height:16px;border-radius:8px;background:#0052cc;color:#fff;font-size:12px;line-height:16px;font-weight:700;text-align:center">6</div><svg style="position:absolute;left:1505px;top:650px" width="25" height="28" viewBox="0 0 25 28" fill="#42526e"><rect x="7" y="6" width="16" height="1.9" rx="0.9"/><rect x="12" y="4.8" width="6" height="1.6" rx="0.4"/><path d="M8.1 9H21.9L19.9 20.8H10.1Z"/></svg><svg style="position:absolute;left:1548px;top:653px" width="8" height="20" viewBox="0 0 8 20" fill="#42526e"><circle cx="4" cy="3" r="2.2"/><circle cx="4" cy="10" r="2.2"/><circle cx="4" cy="17" r="2.2"/></svg>

</body></html>
